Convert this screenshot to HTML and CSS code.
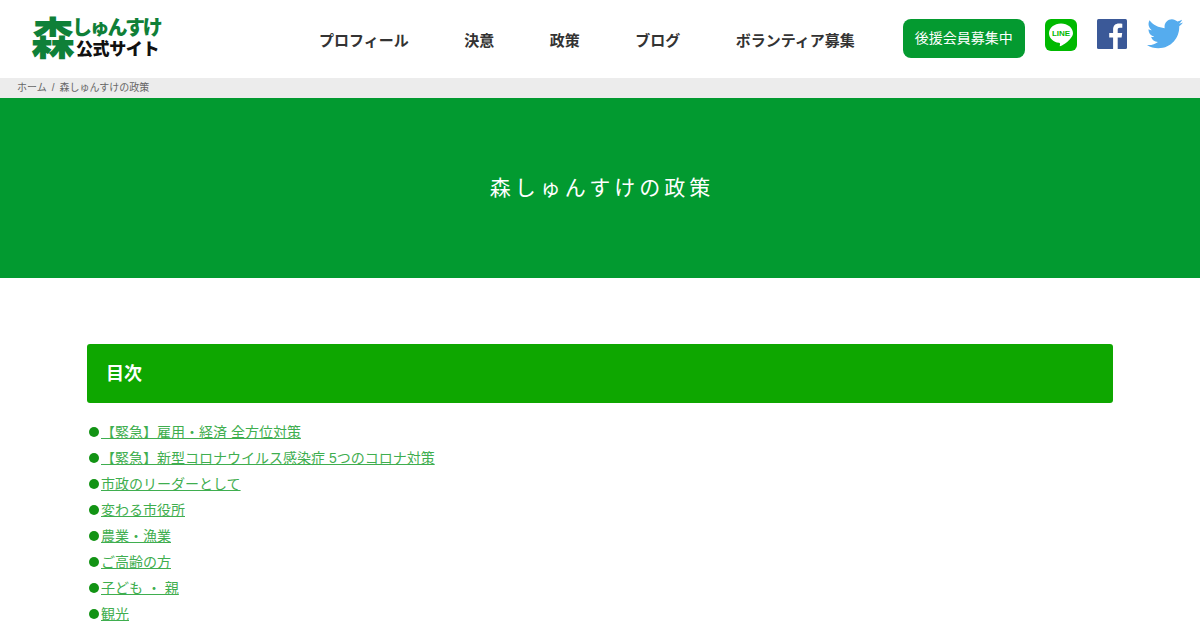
FILE: index.html
```html
<!DOCTYPE html>
<html lang="ja">
<head>
    <meta charset="UTF-8">
    <title>森しゅんすけの政策</title>
    <link rel="stylesheet" href="styles.css">
</head>
<body>

<header class="site-header">
    <a class="logo" href="#">
        <span class="logo-mark">森</span>
        <span class="logo-text">
            <span class="logo-name">しゅんすけ</span>
            <span class="logo-sub">公式サイト</span>
        </span>
    </a>
    <nav class="nav">
        <a href="#">プロフィール</a>
        <a href="#">決意</a>
        <a href="#">政策</a>
        <a href="#">ブログ</a>
        <a href="#">ボランティア募集</a>
    </nav>
    <a class="join-btn" href="#">後援会員募集中</a>
    <div class="sns">
        <a href="#" class="sns-line">
            <svg width="32" height="32" viewBox="0 0 32 32">
                <rect width="32" height="32" rx="6" fill="#00b900"/>
                <path d="M16 4.500c-6.600 0-12 4.300-12 9.700 0 4.800 4.200 8.800 10 9.600.4.100.9.300 1 .6.100.3.100.7 0 1l-.2 1c0 .3-.2 1.100 1 .6 1.200-.5 6.500-3.800 8.900-6.600 1.600-1.800 3.300-3.800 3.300-6.200 0-5.400-5.400-9.700-12-9.700z" fill="#fff"/>
                <text x="16" y="17.300" class="line-text">LINE</text>
            </svg>
        </a>
        <a href="#" class="sns-fb">
            <svg width="30" height="30" viewBox="0 0 30 30">
                <rect width="30" height="30" rx="1.500" fill="#3b5998"/>
                <path d="M20.700 30V18.400h3.900l.6-4.500h-4.500V11c0-1.300.4-2.200 2.200-2.200h2.400v-4c-.4-.1-1.800-.2-3.400-.2-3.400 0-5.800 2.100-5.800 5.900v3.400h-3.900v4.500h3.900V30z" fill="#fff"/>
            </svg>
        </a>
        <a href="#" class="sns-tw">
            <svg width="36" height="30" viewBox="0 0 24 20">
                <path d="M24 2.400c-.9.400-1.800.7-2.800.8 1-.6 1.800-1.600 2.200-2.700-1 .6-2 1-3.100 1.200C19.300.7 18 .1 16.600.1c-2.700 0-4.900 2.200-4.900 4.900 0 .4 0 .8.100 1.100C7.700 5.900 4.100 4 1.700.9c-.4.700-.7 1.600-.7 2.500 0 1.700.9 3.200 2.200 4.100-.8 0-1.600-.2-2.200-.6v.1c0 2.400 1.700 4.400 3.900 4.800-.4.100-.8.200-1.300.2-.3 0-.6 0-.9-.1.600 2 2.400 3.400 4.600 3.400-1.700 1.300-3.800 2.100-6.100 2.100-.4 0-.8 0-1.200-.1 2.200 1.400 4.800 2.200 7.500 2.200 9.100 0 14-7.500 14-14v-.6c1-.7 1.800-1.600 2.500-2.500z" fill="#55acee"/>
            </svg>
        </a>
    </div>
</header>

<div class="breadcrumb">
    <a href="#">ホーム</a>
    <span class="sep">/</span>
    <span>森しゅんすけの政策</span>
</div>

<section class="hero">
    <h1>森しゅんすけの政策</h1>
</section>

<main class="content">
    <h2 class="toc-title">目次</h2>
    <ul class="toc">
        <li><a href="#">【緊急】雇用・経済 全方位対策</a></li>
        <li><a href="#">【緊急】新型コロナウイルス感染症 5つのコロナ対策</a></li>
        <li><a href="#">市政のリーダーとして</a></li>
        <li><a href="#">変わる市役所</a></li>
        <li><a href="#">農業・漁業</a></li>
        <li><a href="#">ご高齢の方</a></li>
        <li><a href="#">子ども ・ 親</a></li>
        <li><a href="#">観光</a></li>
    </ul>
</main>

</body>
</html>
```

FILE: styles.css
```css
html, body {
    height: 630px;
    overflow: hidden;
}
body {
    margin: 0;
    font-family: "Liberation Sans", "Noto Sans CJK JP", sans-serif;
    color: #333;
    background: #fff;
}
a {
    text-decoration: none;
    color: inherit;
}

.site-header {
    display: flex;
    align-items: flex-start;
    height: 78px;
}
.logo {
    display: flex;
    margin: 17px 0 0 31px;
    width: 288px;
}
.logo-mark {
    font-size: 44px;
    line-height: 46px;
    font-weight: 900;
    color: #0f8038;
    width: 44px;
    margin-right: -3px;
}
.logo-text {
    display: flex;
    flex-direction: column;
    font-weight: 900;
}
.logo-name {
    font-size: 20px;
    line-height: 25px;
    letter-spacing: -2.2px;
    color: #0f8038;
    margin-top: -1px;
}
.logo-sub {
    font-size: 17px;
    line-height: 18px;
    letter-spacing: -0.4px;
    color: #111;
    margin-left: 4px;
}
.nav {
    display: flex;
    gap: 55.5px;
    margin-top: 30px;
    font-size: 15px;
    line-height: 22px;
    font-weight: 700;
    color: #333;
}
.join-btn {
    margin: 19px 0 0 48px;
    width: 122px;
    height: 39px;
    line-height: 39px;
    text-align: center;
    font-size: 14px;
    color: #fff;
    background: #049a30;
    border-radius: 8px;
}
.sns {
    display: flex;
    gap: 20px;
    margin: 19px 0 0 20px;
}
.sns a {
    display: block;
    height: 32px;
}
.line-text {
    font-family: "Liberation Sans", sans-serif;
    font-size: 8px;
    font-weight: 700;
    fill: #00b900;
    text-anchor: middle;
}

.breadcrumb {
    height: 20px;
    line-height: 20px;
    padding-left: 17px;
    background: #ececec;
    font-size: 10px;
    color: #666;
    display: flex;
    gap: 5px;
}

.hero {
    height: 176px;
    padding: 0 0 4px 4px;
    background: #029a30;
    display: flex;
    align-items: center;
    justify-content: center;
}
.hero h1 {
    margin: 0;
    font-size: 21px;
    font-weight: 400;
    letter-spacing: 4px;
    color: #fff;
}

.content {
    padding: 66px 87px 0;
}
.toc-title {
    margin: 0;
    height: 57px;
    padding: 2px 0 0 19px;
    line-height: 57px;
    font-size: 18px;
    font-weight: 700;
    color: #fff;
    background: #0ea700;
    border-radius: 3px;
}
.toc {
    list-style: none;
    margin: 16px 0 0;
    padding: 0;
}
.toc li {
    display: flex;
    align-items: center;
    height: 26px;
    line-height: 26px;
    font-size: 14px;
    padding-left: 2px;
}
.toc li::before {
    content: "";
    width: 10px;
    height: 10px;
    margin-right: 2px;
    border-radius: 50%;
    background: #129314;
}
.toc a {
    color: #3fae4f;
    text-decoration: underline;
}
```
